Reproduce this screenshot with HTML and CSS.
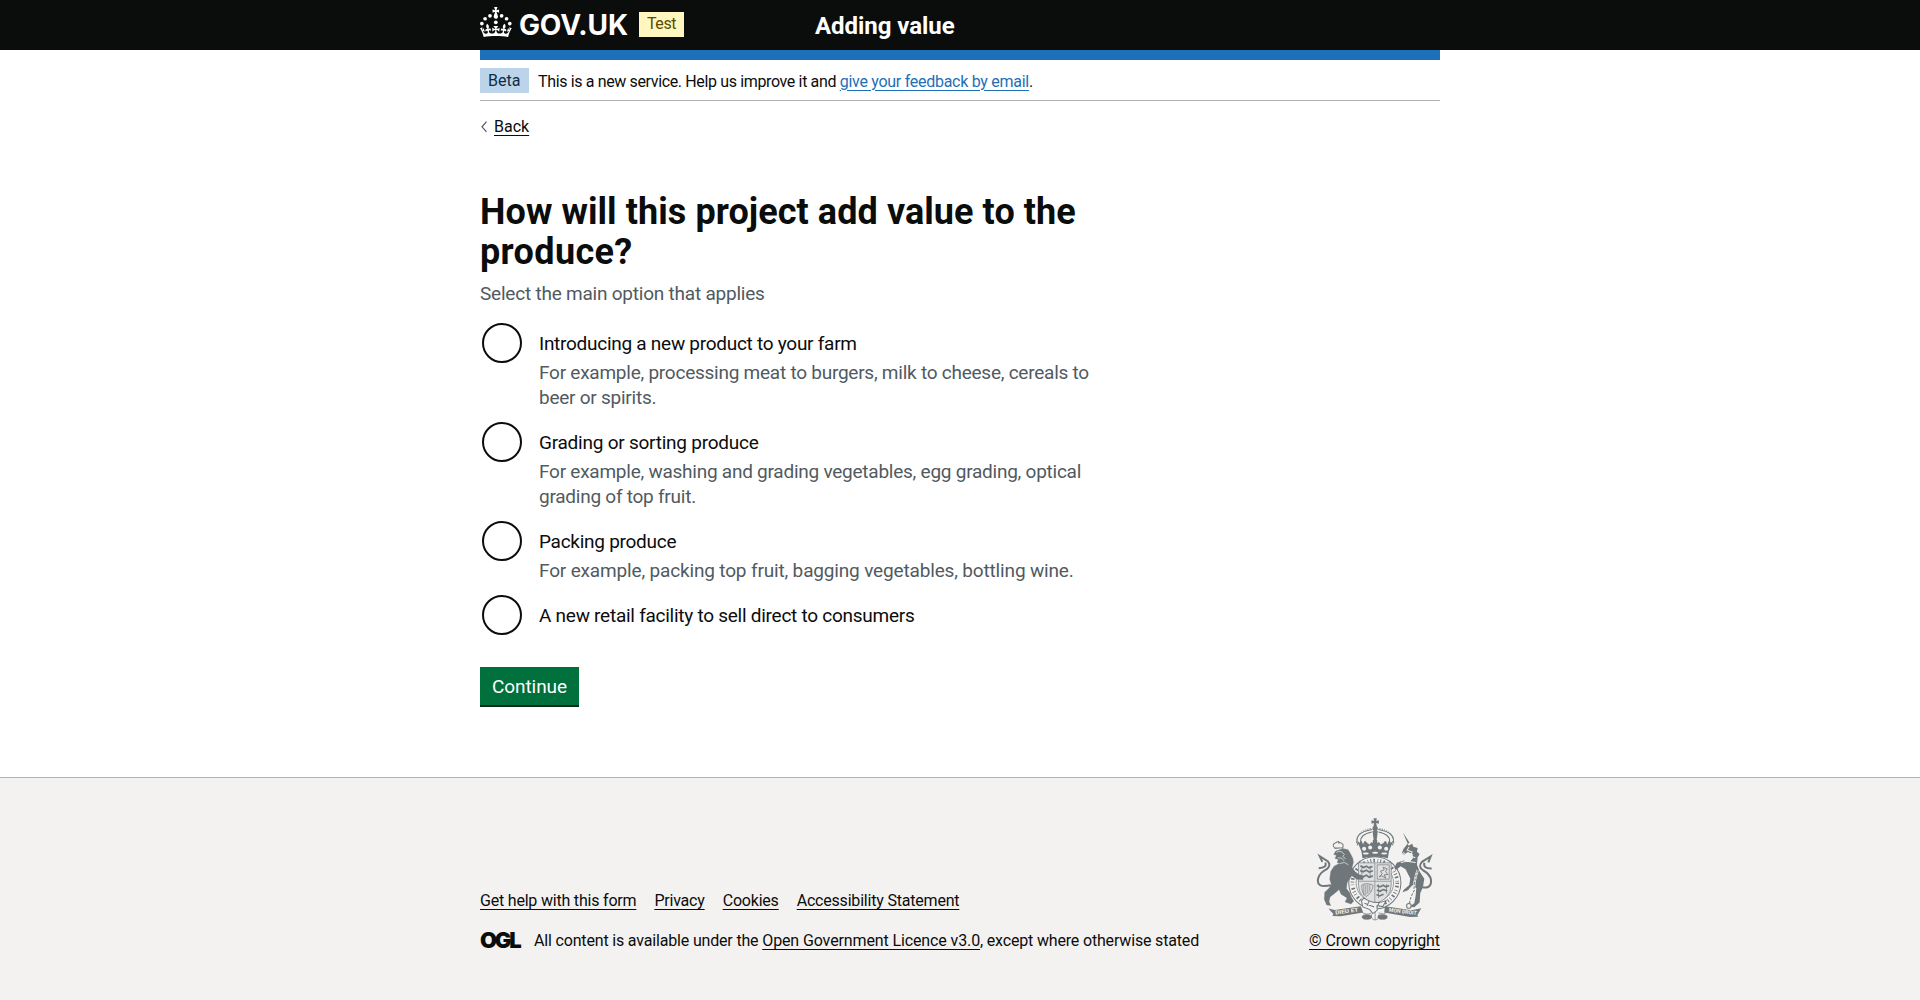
FILE: index.html
```
<!DOCTYPE html>
<html lang="en">
<head>
<meta charset="utf-8">
<title>Adding value</title>
<link rel="stylesheet" href="styles.css">
</head>
<body>
<header class="header">
  <div class="container header-inner">
    <a class="logo" href="#" aria-label="GOV.UK">
      <svg width="32" height="30" viewBox="0 0 64 60" fill="#fff">
        <circle cx="20" cy="17.6" r="3.7"/><circle cx="10.2" cy="23.5" r="3.7"/><circle cx="3.7" cy="33.2" r="3.7"/><circle cx="31.7" cy="30.6" r="3.7"/><circle cx="43.3" cy="17.6" r="3.7"/><circle cx="53.2" cy="23.5" r="3.7"/><circle cx="59.7" cy="33.2" r="3.7"/>
        <path d="M33.1,9.8c.2-.1.3-.3.5-.5l4.6,2.4v-6.8l-4.6,1.5c-.1-.2-.3-.3-.5-.5l1.9-5.9h-6.7l1.9,5.9c-.2.1-.3.3-.5.5l-4.6-1.5v6.8l4.6-2.4c.1.2.3.3.5.5l-2.6,8c-.9,2.8,1.2,5.7,4.1,5.7h0c3,0,5.1-2.9,4.1-5.7l-2.6-8ZM37,37.9s-3.4,3.8-4.1,6.1c2.2,0,4.2-.5,6.4-2.8l-.7,8.5c-2-2.8-4.4-4.1-5.7-3.8.1,3.1.5,6.7,5.8,7.2,3.7.3,6.7-1.5,7-3.8.4-2.6-2-4.3-3.7-1.6-1.4-4.5,2.4-6.1,4.9-3.2-1.9-4.5-1.8-7.7,2.4-10.9,3,4,2.6,7.3-1.2,11.1,2.4-1.3,6.2,0,4,4.6-1.2-2.8-3.7-2.2-4.2.2-.3,1.7.7,3.7,3,4.2,1.9.3,4.7-.9,7-5.9-1.3,0-2.4.7-3.9,1.7l2.4-8c.6,2.3,1.4,3.7,2.2,4.5.6-1.6.5-2.8,0-5.3l5,1.8c-2.6,3.6-5.2,8.7-7.3,17.5-7.4-1.1-15.7-1.7-24.5-1.7h0c-8.8,0-17.1.6-24.5,1.7-2.1-8.9-4.7-13.9-7.3-17.5l5-1.8c-.5,2.5-.6,3.7,0,5.3.8-.8,1.6-2.3,2.2-4.5l2.4,8c-1.5-1-2.6-1.7-3.9-1.7,2.3,5,5.2,6.2,7,5.9,2.3-.4,3.3-2.4,3-4.2-.5-2.4-3-3.1-4.2-.2-2.2-4.6,1.6-6,4-4.6-3.7-3.7-4.2-7.1-1.2-11.1,4.2,3.2,4.3,6.4,2.4,10.9,2.5-2.8,6.3-1.3,4.9,3.2-1.8-2.7-4.1-1-3.7,1.6.3,2.3,3.3,4.1,7,3.8,5.4-.5,5.7-4.2,5.8-7.2-1.3-.2-3.7,1-5.7,3.8l-.7-8.5c2.2,2.3,4.2,2.7,6.4,2.8-.7-2.3-4.1-6.1-4.1-6.1h10.6Z"/>
      </svg>
      <span class="logo-text">GOV.UK</span>
    </a>
    <strong class="tag tag-test">Test</strong>
    <a class="service" href="#">Adding value</a>
  </div>
</header>
<div class="container page">
  <div class="phase">
    <strong class="tag tag-beta">Beta</strong>
    <p><span class="phase-text">This is a new service. Help us improve it and </span><a class="phase-link" href="#">give your feedback by email</a>.</p>
  </div>
  <a class="back" href="#"><svg width="6" height="12" viewBox="0 0 6 12"><path d="M5.5.7 1 5.8l4.5 5.1" fill="none" stroke="#505a5f" stroke-width="1.2"/></svg><span>Back</span></a>
  <main>
    <h1>How will this project add value to the<br><span class="h1-end">produce?</span></h1>
    <p class="hint lead">Select the main option that applies</p>
    <div class="radios">
      <div class="radio"><i class="ring"></i><div><label class="l1">Introducing a new product to your farm</label><p class="hint">For example, processing meat to burgers, milk to cheese, cereals to<br>beer or spirits.</p></div></div>
      <div class="radio"><i class="ring"></i><div><label>Grading or sorting produce</label><p class="hint">For example, washing and grading vegetables, egg grading, optical<br>grading of top fruit.</p></div></div>
      <div class="radio"><i class="ring"></i><div><label class="l1">Packing produce</label><p class="hint packing">For example, packing top fruit, bagging vegetables, bottling wine.</p></div></div>
      <div class="radio"><i class="ring"></i><div><label class="l4">A new retail facility to sell direct to consumers</label></div></div>
    </div>
    <button class="button">Continue</button>
  </main>
</div>
<footer class="footer">
  <div class="container footer-inner">
    <div>
      <nav class="links"><a href="#">Get help with this form</a><a href="#">Privacy</a><a href="#">Cookies</a><a href="#">Accessibility Statement</a></nav>
      <div class="licence">
        <span class="ogl"><b>O</b><b>G</b><b>L</b></span>
        <p>All content is available under the <a class="ogl-link" href="#">Open Government Licence v3.0</a>, except where otherwise stated</p>
      </div>
    </div>
    <div class="copyright">
      <svg width="117" height="103" viewBox="80 52 350 308" fill="#6f777b" stroke="#6f777b">
        <!-- crown -->
        <g stroke="none"><path d="M252 53h10l-2 8 8-2v10l-8-2 2 9h-10l2-9-8 2V59l8 2z"/><circle cx="257" cy="83" r="8"/><path d="M249 91h16l-4 32h-8z"/></g>
        <g fill="none" stroke-width="3"><path d="M205 134q-14-39 43-48M309 134q14-39-43-48"/><path d="M214 124q-4-22 33-30M300 124q4-22-33-30"/><path d="M201 126q2-36 45-43M313 126q-2-36-45-43" stroke-dasharray="3 4"/></g>
        <path stroke="none" d="m202 118 8 8 6-6 5 11q4-18 12-4l8 4q4-10 9-4v-9h13v9q7-6 10 4l9-4q7-14 11 4l5-11 6 6 8-8-14 34-3 20q-38-8-76 0l-3-20z"/>
        <g fill="#f3f2f1" stroke="none"><circle cx="224" cy="144" r="6"/><circle cx="242" cy="140" r="6"/><circle cx="271" cy="140" r="6"/><circle cx="290" cy="144" r="6"/><ellipse cx="229" cy="158" rx="9" ry="3"/><ellipse cx="257" cy="156" rx="9" ry="3"/><ellipse cx="284" cy="158" rx="9" ry="3"/></g>
        <!-- garter and shield -->
        <g fill="none"><circle cx="256" cy="246" r="78" stroke-width="3"/><circle cx="256" cy="246" r="56" stroke-width="2"/><circle cx="256" cy="246" r="67" stroke-width="11" stroke-dasharray="3 6 5 8 2 6"/></g>
        <path fill="#e0e0e0" stroke-width="2" d="M207 186h98v66q0 41-49 57-49-16-49-57z"/>
        <path fill="none" stroke-width="3" opacity=".6" d="M256 187v120M208 241h96"/>
        <g fill="none" stroke-width="5"><path d="M213 195l9 5 9-4 7 5 11-4M212 209l9 4 10-5 8 6 11-4M212 224l9 4 10-5 8 6 11-4M262 254l9 4 10-5 8 5 10-4M262 267l9 4 10-5 12 4M261 281l9 4 12-5"/><path stroke-width="2" d="M263 192h36v43h-36zM217 195v36M242 195v36M267 250v42M291 250v28"/><path d="m269 228 9-9-5-8 11-4-3-8 12 5-5 8 7 9-11 1 5 10-12-7z" stroke-width="2.5"/><path stroke-width="2" d="M217 253q12-9 34 0-3 23-21 34-14-9-13-34M223 252v31M229 251v31M235 251v28M241 251v22"/></g>
        <!-- lion -->
        <path stroke-width="1" d="m139 151-6 10 8 2-4 10 10 3-4 9 8 2-17 9-10 16-3 23 5 16-7 11-13 12-1 22 7 16 12 2-5-12 3-14 17-13 10-9 6 14 18 11-6 12 18 6 8-9-6-9-6-15-10-13 2-17 14-21 15 10 18 2 2-10-12-5-12-8-10-14 4-16-2-12-8-15-6-10-16-4-12 5z"/>
        <g fill="none"><path d="M125 253q-47 10-38-22 5-16 25-26 14-11 3-24l-24-15 8 17M88 202q26-1 20-17" stroke-width="6"/><path d="M137 143q-12-13 2-17 7-6 13 0 13 3 8 15zM137 142l24-1M148 121v8" stroke-width="3"/><path stroke="#f3f2f1" stroke-width="2" d="m141 155 8-4 9 3 7 7-5 6 9 7M145 171l12 1 7 8M151 188l14-3 12 7"/></g>
        <!-- unicorn -->
        <path stroke="none" d="m340 95 17 40 11-6 3 9 13 4-2 11 8 7-6 10-2 22 8 20 14 22-4 24-8 18-2 29-16 14-13-2 13-10 4-22 2-23-12-9-13 15-16 6 3-7 17-15 3-19-14-28-15-9-14 12-5-8 8-14 20-7 18 5 10-12-1-12-14-6-12 8-6-6 5-12 10-13 8-5z"/>
        <g fill="none"><path d="M383 256q44 14 41-19-3-17-23-28-17-11-4-26l26-16-7 18M426 203q-26 1-22-17" stroke-width="6"/><path stroke="#f3f2f1" d="M384 208q-13 40-10 61-12 18-15 43" stroke-width="7"/><path stroke-dasharray="8 4" d="M384 208q-13 40-10 61-12 18-15 43" stroke-width="3"/><circle cx="358" cy="315" r="7" stroke-width="3"/><path stroke="#f3f2f1" stroke-width="3" d="m358 139-5 9 14 5-2 13 12 5M340 156l6 2M334 185l17-4 27 4"/></g>
        <!-- motto scroll -->
        <path stroke="none" d="m117 323 19 4 78-11 7 19-67 11-25-1 3-6zM286 316l80 12 29-6-12 21 3 4-25 1-77-13z"/>
        <g stroke="none" fill="#f3f2f1" class="motto"><text x="138" y="341" textLength="70" lengthAdjust="spacingAndGlyphs" transform="rotate(-8 138 341)">DIEU ET</text><text x="298" y="332" textLength="83" lengthAdjust="spacingAndGlyphs" transform="rotate(7 298 332)">MON DROIT</text></g>
        <path fill="#f3f2f1" stroke-width="3" d="m216 300 7-9q31 23 67 8l-10 18-17-3v14l-13 10-9-12-21-8zM225 307l29 11M239 299l-6 16M270 304l-9 16"/>
        <g stroke-width="2"><ellipse cx="232" cy="348" rx="14" ry="7"/><ellipse cx="279" cy="348" rx="14" ry="7"/><path fill="none" d="M246 340q-3 16 11 17 14-1 11-17M217 333q14 11 28 3M267 336q16 7 27-3M257 333v24"/></g>
      </svg>
      <a href="#">© Crown copyright</a>
    </div>
  </div>
</footer>
</body>
</html>
```
FILE: styles.css
```
* { box-sizing: border-box; }
body { margin: 0; min-height: 1000px; display: flex; flex-direction: column; font: 16px/20px Roboto, "Noto Sans", sans-serif; color: #0b0c0c; background: #fff; letter-spacing: -.2px; }
p, h1 { margin: 0; }
a { color: inherit; text-decoration: underline; text-decoration-thickness: 1px; text-underline-offset: 3px; }
.container { width: 960px; margin: 0 auto; }

.header { background: #0b0c0c; height: 50px; }
.header-inner { display: flex; align-items: flex-start; }
.logo { display: flex; gap: 7px; width: 148px; height: 30px; margin-top: 7px; color: #fff; text-decoration: none; }
.logo svg { display: block; }
.logo-text { font: 700 28px/36px Inter, sans-serif; letter-spacing: -.1px; white-space: nowrap; }
.tag { font-weight: 400; height: 25px; line-height: 24px; padding: 0 8px; letter-spacing: 0; }
.tag-test { margin: 12px 0 0 11px; width: 45px; background: #fff7bf; color: #594d00; letter-spacing: -.4px; }
.service { margin: 11px 0 0 131px; color: #fff; font-weight: 700; font-size: 24px; line-height: 30px; letter-spacing: -.05px; text-decoration: none; }

.page { border-top: 10px solid #1d70b8; flex: 1; }
.phase { display: flex; align-items: center; gap: 10px; padding: 8px 0 7px; border-bottom: 1px solid #b1b4b6; }
.phase p { white-space: pre; padding-top: 2px; margin-left: -1px; }
.tag-beta { width: 49px; background: #bbd4ea; color: #0c2d4a; line-height: 26px; }
.phase-text { letter-spacing: -.36px; }
.phase-link { color: #1d70b8; letter-spacing: -.28px; }
.back { display: flex; align-items: center; gap: 7px; width: 52px; margin-top: 16px; padding-left: 1px; text-decoration: none; letter-spacing: 0; }
.back span { text-decoration: underline; text-underline-offset: 3px; }

main { padding-top: 55px; }
h1 { font-size: 36px; line-height: 40px; letter-spacing: .07px; }
.h1-end { letter-spacing: .35px; }
.hint { font-size: 19px; line-height: 25px; color: #505a5f; letter-spacing: -.245px; }
.lead { margin: 9px 0 15px; letter-spacing: -.22px; }
.radios { display: flex; flex-direction: column; gap: 10px; }
.radio { display: flex; gap: 17px; min-height: 44px; padding-left: 2px; }
.ring { width: 40px; height: 40px; margin-top: 2px; border: 2px solid #0b0c0c; border-radius: 50%; }
.radio label { display: block; padding: 10px 0 4px; font-size: 19px; line-height: 25px; letter-spacing: -.24px; }
.radio .l1 { letter-spacing: -.27px; }
.radio .l4 { letter-spacing: -.26px; }
.packing { letter-spacing: -.16px; }
.button { display: block; margin-top: 30px; width: 99px; height: 38px; padding: 0; border: 0; background: #00703c; color: #fff; font: 19px/40px Roboto, sans-serif; box-shadow: 0 2px 0 #002d18; letter-spacing: -.07px; }

.footer { height: 223px; background: #f3f2f1; border-top: 1px solid #b1b4b6; }
.footer-inner { display: flex; justify-content: space-between; padding-top: 40px; }
.links { display: flex; gap: 18px; margin: 73px 0 20px; }
.licence { display: flex; gap: 13px; letter-spacing: -.17px; }
.ogl-link { letter-spacing: -.12px; }
.ogl { display: flex; width: 41px; height: 17px; font: 900 22px/18px Inter, sans-serif; letter-spacing: -2.2px; }
.copyright { display: flex; flex-direction: column; align-items: center; gap: 10px; letter-spacing: -.09px; }
.motto { font: 700 16px Roboto, sans-serif; letter-spacing: 0; }
```
